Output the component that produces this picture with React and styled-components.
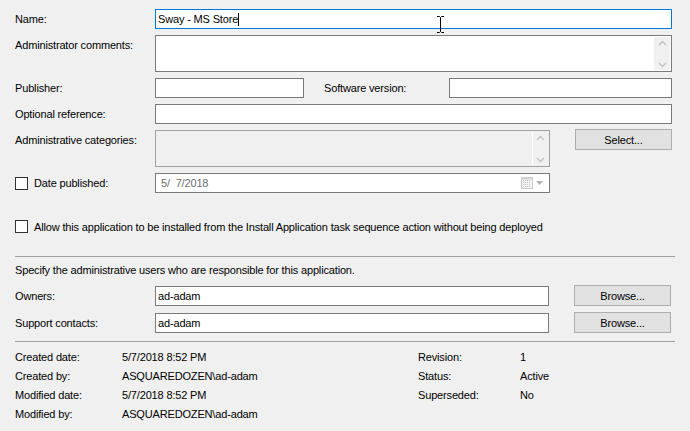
import React from "react";
import styled, { createGlobalStyle } from "styled-components";

const Global = createGlobalStyle`
  html, body { margin: 0; padding: 0; background: #f0f0f0; }
  body { font-family: "Liberation Sans", Arial, sans-serif; font-size: 11px; letter-spacing: -0.16px; color: #000; }
  * { box-sizing: border-box; }
`;

const Page = styled.div`
  width: 690px;
  height: 431px;
  background: #f0f0f0;
  padding: 9px 18px 0 15px;
  position: relative;
  overflow: hidden;
`;

const Row = styled.div`
  display: flex;
  align-items: ${(p) => (p.$top ? "flex-start" : "center")};
  margin-top: ${(p) => p.$mt ?? 7}px;
`;

const Label = styled.div`
  width: 140px;
  flex: none;
  white-space: nowrap;
  padding-top: ${(p) => (p.$top ? 4 : 0)}px;
`;

const Field = styled.div`
  position: relative;
  height: ${(p) => p.$h ?? 20}px;
  width: ${(p) => (p.$w ? p.$w + "px" : "auto")};
  flex: ${(p) => (p.$w ? "none" : "1")};
  border: 1px solid ${(p) => (p.$focus ? "#0078d7" : p.$disabled ? "#a0a0a0" : "#7a7a7a")};
  background: ${(p) => (p.$disabled ? "#f0f0f0" : "#fff")};
  display: flex;
  align-items: ${(p) => (p.$multi ? "stretch" : "center")};
  padding-left: ${(p) => (p.$gray ? 5 : 2)}px;
  color: ${(p) => (p.$gray ? "#6d6d6d" : "#000")};
  white-space: nowrap;
`;

const Caret = styled.span`
  display: inline-block;
  width: 1px;
  height: 13px;
  background: #000;
  vertical-align: middle;
`;

const Scroll = styled.div`
  width: 16px;
  margin: 1px 1px 1px auto;
  background: #f0f0f0;
  border-left: ${(p) => (p.$disabled ? "1px solid #fff" : "none")};
  display: flex;
  flex-direction: column;
  justify-content: space-between;
  align-items: center;
  padding: 3px 0 2px;
`;

const Chevron = ({ up }) => (
  <svg width="9" height="6" viewBox="0 0 9 6">
    <path
      d={up ? "M1 5 L4.5 1.5 L8 5" : "M1 1 L4.5 4.5 L8 1"}
      fill="none"
      stroke="#c3c3c3"
      strokeWidth="1.4"
    />
  </svg>
);

const Mid = styled.div`
  width: 145px;
  flex: none;
  padding-left: 20px;
  white-space: nowrap;
`;

const Button = styled.div`
  width: 97px;
  height: 21px;
  flex: none;
  margin-left: 25px;
  background: #e1e1e1;
  border: 1px solid #adadad;
  display: flex;
  align-items: center;
  justify-content: center;
  align-self: flex-start;
  margin-top: ${(p) => p.$mt ?? 0}px;
`;

const Check = styled.span`
  display: inline-block;
  width: 13px;
  height: 13px;
  border: 1px solid #333;
  background: #fff;
  flex: none;
  margin-right: 6px;
`;

const CheckLabel = styled.div`
  display: flex;
  align-items: center;
  width: 140px;
  flex: none;
  white-space: nowrap;
`;

const DateIcons = styled.div`
  margin-left: auto;
  margin-right: 6px;
  display: flex;
  align-items: center;
  gap: 3px;
`;

const Separator = styled.div`
  height: 1px;
  background: #a0a0a0;
  margin-top: ${(p) => p.$mt}px;
  margin-right: -3px;
`;

const Text = styled.div`
  margin-top: ${(p) => p.$mt ?? 0}px;
  white-space: nowrap;
`;

const Info = styled.div`
  display: grid;
  grid-template-columns: 107px 296px 102px auto;
  grid-auto-rows: 19px;
  align-items: center;
  margin-top: ${(p) => p.$mt}px;
  white-space: nowrap;
`;

const IBeam = styled.svg`
  position: absolute;
  left: 436px;
  top: 16px;
`;

const CalendarIcon = () => (
  <svg width="12" height="12" viewBox="0 0 12 12">
    <rect x="0.5" y="0.5" width="11" height="11" fill="#f4f4f4" stroke="#c8c8c8" />
    <rect x="0.5" y="0.5" width="11" height="2" fill="#d4d4d4" />
    {[3, 5, 7, 9].map((y) =>
      [2, 4, 6, 8].map((x) => (
        <rect key={x + "-" + y} x={x} y={y} width="1" height="1" fill="#c0c0c0" />
      ))
    )}
  </svg>
);

const DropArrow = () => (
  <svg width="7" height="4" viewBox="0 0 7 4">
    <path d="M0 0 L7 0 L3.5 4 Z" fill="#b0b0b0" />
  </svg>
);

export default function App() {
  return (
    <>
      <Global />
      <Page>
        <Row $mt={0}>
          <Label>Name:</Label>
          <Field $focus>
            Sway - MS Store<Caret />
          </Field>
        </Row>
        <Row $mt={6} $top>
          <Label $top>Administrator comments:</Label>
          <Field $h={37} $multi>
            <Scroll>
              <Chevron up />
              <Chevron />
            </Scroll>
          </Field>
        </Row>
        <Row $mt={6}>
          <Label>Publisher:</Label>
          <Field $w={149} />
          <Mid>Software version:</Mid>
          <Field />
        </Row>
        <Row $mt={6}>
          <Label>Optional reference:</Label>
          <Field />
        </Row>
        <Row $mt={6} $top>
          <Label $top>Administrative categories:</Label>
          <Field $w={395} $h={37} $disabled $multi>
            <Scroll $disabled>
              <Chevron up />
              <Chevron />
            </Scroll>
          </Field>
          <Button $mt={-1}>Select...</Button>
        </Row>
        <Row $mt={6}>
          <CheckLabel>
            <Check />
            Date published:
          </CheckLabel>
          <Field $w={395} $gray>
            5/&nbsp; 7/2018
            <DateIcons>
              <CalendarIcon />
              <DropArrow />
            </DateIcons>
          </Field>
        </Row>
        <Row $mt={27}>
          <Check />
          Allow this application to be installed from the Install Application task sequence action without being deployed
        </Row>
        <Separator $mt={23} />
        <Text $mt={7}>Specify the administrative users who are responsible for this application.</Text>
        <Row $mt={10}>
          <Label>Owners:</Label>
          <Field $w={394}>ad-adam</Field>
          <Button $mt={-1}>Browse...</Button>
        </Row>
        <Row $mt={6}>
          <Label>Support contacts:</Label>
          <Field $w={394}>ad-adam</Field>
          <Button>Browse...</Button>
        </Row>
        <Separator $mt={8} />
        <Info $mt={5}>
          <span>Created date:</span>
          <span>5/7/2018 8:52 PM</span>
          <span>Revision:</span>
          <span>1</span>
          <span>Created by:</span>
          <span>ASQUAREDOZEN\ad-adam</span>
          <span>Status:</span>
          <span>Active</span>
          <span>Modified date:</span>
          <span>5/7/2018 8:52 PM</span>
          <span>Superseded:</span>
          <span>No</span>
          <span>Modified by:</span>
          <span>ASQUAREDOZEN\ad-adam</span>
        </Info>
        <IBeam width="9" height="17" viewBox="0 0 9 17">
          <path d="M1 0.5 H3.5 L4.5 1.5 L5.5 0.5 H8 M4.5 1.5 V15.5 M1 16.5 H3.5 L4.5 15.5 L5.5 16.5 H8" fill="none" stroke="#000" strokeWidth="1" />
        </IBeam>
      </Page>
    </>
  );
}
